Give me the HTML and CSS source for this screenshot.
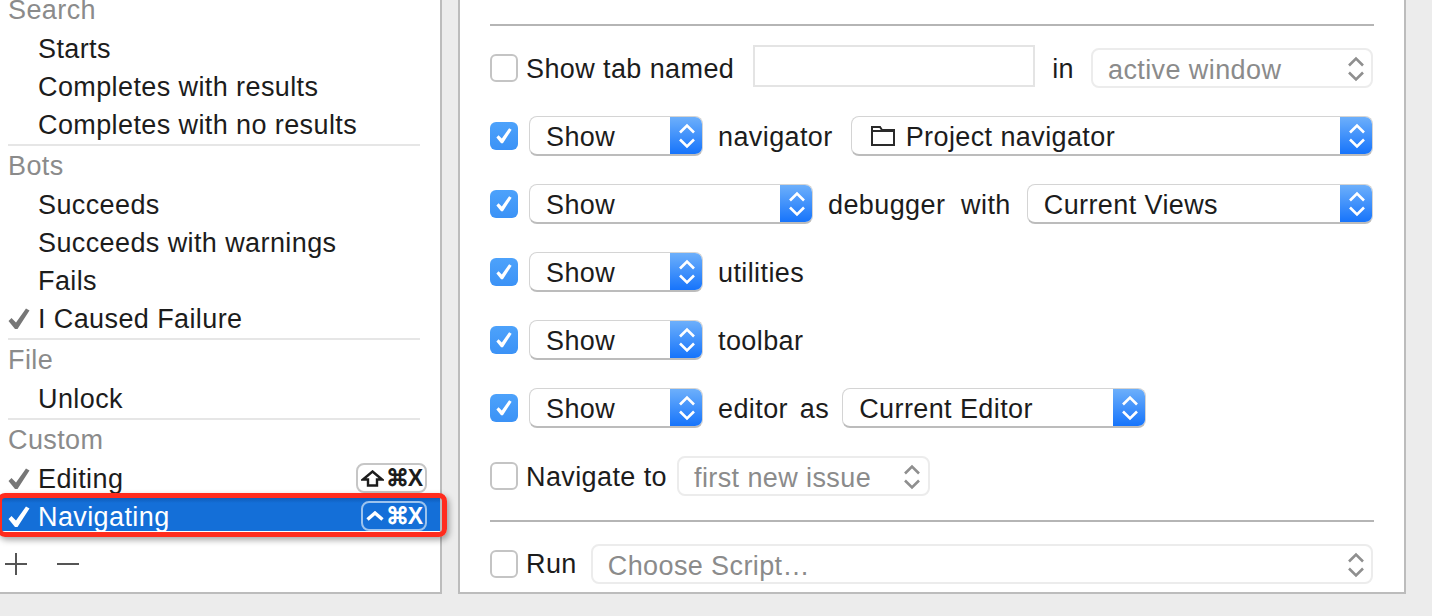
FILE: index.html
```html
<!DOCTYPE html>
<html lang="en">
<head>
    <meta charset="UTF-8">
    <meta name="viewport" content="width=device-width, initial-scale=1.0">
    <title>Behaviors</title>
    <link rel="stylesheet" href="styles.css">
</head>
<body>
    <svg class="defs" width="0" height="0">
        <symbol id="tick" viewBox="0 0 22 22">
            <path d="M0.5 13 L3.5 10 L8 14.5 L18 0.5 L21.5 2.5 L9.5 21 L7 21 Z"/>
        </symbol>
        <symbol id="arrows" viewBox="0 0 18 28">
            <path d="M2 10.5 L9 3.5 L16 10.5 M2 17.5 L9 24.5 L16 17.5" fill="none" stroke-width="2.6"/>
        </symbol>
    </svg>

    <div class="sidebar">
        <div class="list">
            <div class="head">Search</div>
            <div class="item">Starts</div>
            <div class="item">Completes with results</div>
            <div class="item">Completes with no results</div>
            <div class="sep"></div>
            <div class="head">Bots</div>
            <div class="item">Succeeds</div>
            <div class="item">Succeeds with warnings</div>
            <div class="item">Fails</div>
            <div class="item"><svg class="tick"><use href="#tick"/></svg>I Caused Failure</div>
            <div class="sep"></div>
            <div class="head">File</div>
            <div class="item">Unlock</div>
            <div class="sep"></div>
            <div class="head">Custom</div>
            <div class="item"><svg class="tick"><use href="#tick"/></svg>Editing<span class="keys"><svg class="shift" width="23" height="17" viewBox="0 0 23 17"><path d="M11.5 1.5L21 9.5H16V15.5H7V9.5H2Z"/></svg>⌘X</span></div>
            <div class="item selected"><svg class="tick"><use href="#tick"/></svg>Navigating<span class="keys"><svg class="caret" width="18" height="10" viewBox="0 0 18 10"><path d="M1.5 8.5L9 2L16.5 8.5"/></svg>⌘X</span></div>
        </div>
        <div class="list-tools">
            <svg width="22" height="22" viewBox="0 0 22 22"><path d="M11 0V22M0 11H22"/></svg>
            <svg width="22" height="22" viewBox="0 0 22 22"><path d="M0 11H22"/></svg>
        </div>
    </div>

    <div class="panel">
        <div class="rule first"></div>

        <div class="row">
            <span class="check"></span>
            <span class="label tab-name">Show tab named</span>
            <span class="field"></span>
            <span class="label in">in</span>
            <div class="select off w-window"><span class="value">active window</span><span class="stepper"><svg><use href="#arrows"/></svg></span></div>
        </div>

        <div class="row">
            <span class="check on"><svg><use href="#tick"/></svg></span>
            <div class="select w-show"><span class="value">Show</span><span class="stepper"><svg><use href="#arrows"/></svg></span></div>
            <span class="label">navigator</span>
            <div class="select grow"><span class="value"><svg class="folder" width="24" height="20" viewBox="0 0 24 20"><path d="M1 19V1H9L11 4H23V19ZM1 5H23"/></svg>Project navigator</span><span class="stepper"><svg><use href="#arrows"/></svg></span></div>
        </div>

        <div class="row">
            <span class="check on"><svg><use href="#tick"/></svg></span>
            <div class="select w-debug"><span class="value">Show</span><span class="stepper"><svg><use href="#arrows"/></svg></span></div>
            <span class="label debugger">debugger&nbsp; with</span>
            <div class="select grow"><span class="value">Current Views</span><span class="stepper"><svg><use href="#arrows"/></svg></span></div>
        </div>

        <div class="row">
            <span class="check on"><svg><use href="#tick"/></svg></span>
            <div class="select w-show"><span class="value">Show</span><span class="stepper"><svg><use href="#arrows"/></svg></span></div>
            <span class="label">utilities</span>
        </div>

        <div class="row">
            <span class="check on"><svg><use href="#tick"/></svg></span>
            <div class="select w-show"><span class="value">Show</span><span class="stepper"><svg><use href="#arrows"/></svg></span></div>
            <span class="label">toolbar</span>
        </div>

        <div class="row">
            <span class="check on"><svg><use href="#tick"/></svg></span>
            <div class="select w-show"><span class="value">Show</span><span class="stepper"><svg><use href="#arrows"/></svg></span></div>
            <span class="label editor-as">editor as</span>
            <div class="select w-editor"><span class="value">Current Editor</span><span class="stepper"><svg><use href="#arrows"/></svg></span></div>
        </div>

        <div class="row">
            <span class="check"></span>
            <span class="label">Navigate to</span>
            <div class="select off w-issue"><span class="value">first new issue</span><span class="stepper"><svg><use href="#arrows"/></svg></span></div>
        </div>

        <div class="rule second"></div>

        <div class="row">
            <span class="check"></span>
            <span class="label run">Run</span>
            <div class="select off grow"><span class="value">Choose Script…</span><span class="stepper"><svg><use href="#arrows"/></svg></span></div>
        </div>
    </div>
</body>
</html>
```

FILE: styles.css
```css
html, body {
    height: 616px;
    overflow: hidden;
}
body {
    margin: 0;
    background-color: #ececec;
    font-family: "Liberation Sans", Arial, sans-serif;
    font-size: 27px;
    letter-spacing: 0.4px;
    color: #1c1c1c;
    display: flex;
    align-items: flex-start;
    gap: 16px;
}
.defs {
    position: absolute;
}

/* left list */
.sidebar {
    width: 440px;
    height: 592px;
    flex: none;
    background-color: #fff;
    border-right: 2px solid #bcbcbc;
    border-bottom: 2px solid #bcbcbc;
    display: flex;
    flex-direction: column;
}
.list {
    margin-top: -10px;
}
.head {
    height: 40px;
    line-height: 40px;
    padding-left: 8px;
    color: #8b8b8b;
}
.item {
    height: 38px;
    box-sizing: border-box;
    padding-left: 38px;
    position: relative;
    display: flex;
    align-items: center;
}
.sep {
    height: 2px;
    margin: 0 20px 0 8px;
    background-color: #e6e6e6;
}
.tick {
    position: absolute;
    left: 8px;
    top: 8px;
    width: 22px;
    height: 22px;
    fill: #777;
}
.keys {
    position: absolute;
    right: 13px;
    top: 3px;
    height: 30px;
    box-sizing: border-box;
    padding: 0 3px;
    border: 2px solid #c6c6c6;
    border-radius: 8px;
    background-color: #fff;
    font-weight: bold;
    font-size: 23px;
    letter-spacing: -1px;
    color: #1c1c1c;
    display: flex;
    align-items: center;
    gap: 2px;
}
.shift path {
    fill: none;
    stroke: #1c1c1c;
    stroke-width: 2.4;
}
.caret path {
    fill: none;
    stroke: #fff;
    stroke-width: 3.4;
}
.selected {
    color: #fff;
    height: 33px;
    padding-top: 6px;
    margin-bottom: 5px;
    background: linear-gradient(#0f5cb8, #146fd8 5px);
}
.selected .tick {
    fill: #fff;
}
.selected .keys {
    background: none;
    color: #fff;
    border-color: #9cc3ee;
    z-index: 2;
}
/* red annotation box over the selected row */
.selected::after {
    content: "";
    position: absolute;
    left: -3px;
    right: -7px;
    top: -5px;
    bottom: -6px;
    border: 5px solid #ff2c1e;
    border-radius: 8px;
    box-shadow: 2px 3px 6px rgba(0, 0, 0, 0.35);
}
.list-tools {
    margin-top: 17px;
    padding-left: 5px;
    display: flex;
    gap: 30px;
}
.list-tools path {
    stroke: #555;
    stroke-width: 2;
    fill: none;
}

/* right panel */
.panel {
    width: 884px;
    height: 592px;
    flex: none;
    padding: 0 30px;
    background-color: #fff;
    border: 2px solid #bcbcbc;
    border-top: none;
}
.rule {
    height: 2px;
    background-color: #b5b5b5;
}
.rule.first {
    margin: 24px 0 22px;
}
.rule.second {
    margin: 24px 0 22px;
}
.row {
    height: 40px;
    margin-bottom: 28px;
    padding-right: 1px;
    display: flex;
    align-items: center;
}
.row:nth-last-child(3) {
    margin-bottom: 0;
}
.label {
    margin: 2px 18px 0 15px;
    white-space: nowrap;
}
.label.debugger {
    margin-right: 16px;
}
.label.editor-as {
    margin-right: 13px;
    word-spacing: 4px;
}
.check {
    width: 28px;
    height: 28px;
    flex: none;
    box-sizing: border-box;
    border: 2px solid #c4c4c4;
    border-radius: 6px;
    background-color: #fff;
    margin-right: 8px;
}
.check + .label {
    margin-left: 0;
    margin-right: 10px;
}
.check + .label.tab-name {
    margin-right: 19px;
}
.check + .label.run {
    margin-top: 0;
    margin-right: 14px;
}
.check.on {
    margin-right: 11px;
    border: none;
    background: linear-gradient(#4da2fb, #3b92f6);
    display: flex;
    align-items: center;
    justify-content: center;
}
.check svg {
    width: 16px;
    height: 16px;
    fill: #fff;
}
.field {
    width: 282px;
    height: 42px;
    margin-top: -4px;
    box-sizing: border-box;
    border: 2px solid #e4e4e4;
}
.label.in {
    margin: 2px 17px 0 17px;
}
.select {
    height: 40px;
    box-sizing: border-box;
    flex: none;
    display: flex;
    background-color: #fff;
    border: 1px solid #d4d4d4;
    border-bottom: 2px solid #bcbcbc;
    border-radius: 8px;
    overflow: hidden;
}
.grow {
    flex: 1;
}
.w-show { width: 174px; }
.w-debug { width: 284px; }
.w-editor { width: 304px; }
.w-window { width: 282px; }
.w-issue { width: 253px; }
.value {
    flex: 1;
    padding-left: 16px;
    padding-top: 4px;
    white-space: nowrap;
    display: flex;
    align-items: center;
}
.folder {
    margin: -3px 11px 0 3px;
}
.folder path {
    stroke: #2a2a2a;
    stroke-width: 2;
    fill: none;
}
.stepper {
    width: 33px;
    margin: -1px -1px -2px 0;
    background: linear-gradient(#6fb1fb, #1271fb);
    display: flex;
    align-items: center;
    justify-content: center;
}
.stepper svg {
    width: 18px;
    height: 28px;
    stroke: #fff;
    fill: none;
}
.off {
    border: 2px solid #ececec;
    color: #8b8b8b;
}
.off .stepper {
    background: none;
}
.off .stepper svg {
    stroke: #8f8f8f;
}
.off .value {
    padding-left: 15px;
}
```
